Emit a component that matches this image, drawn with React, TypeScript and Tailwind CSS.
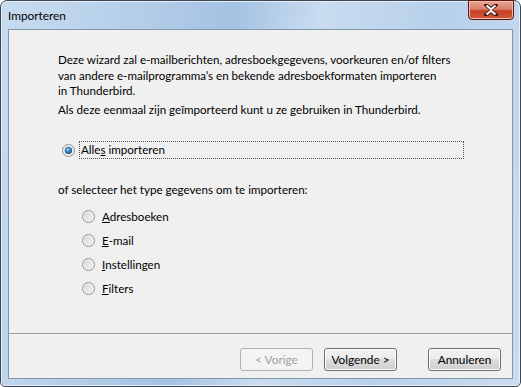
import React from "react"

const FONT = { fontFamily: '"Segoe UI", Lato, "Open Sans", sans-serif' }

const Radio: React.FC<{ checked?: boolean }> = ({ checked }) => (
  <svg width="13" height="13" viewBox="0 0 13 13" className="flex-shrink-0">
    <defs>
      <linearGradient id="rb" x1="0" y1="0" x2="1" y2="1">
        <stop offset="0" stopColor="#d6d6d6" />
        <stop offset="1" stopColor="#f6f6f6" />
      </linearGradient>
      <radialGradient id="dot" cx="0.4" cy="0.35" r="0.7">
        <stop offset="0" stopColor="#a8dcf6" />
        <stop offset="0.5" stopColor="#2b8ccc" />
        <stop offset="1" stopColor="#0d4f84" />
      </radialGradient>
    </defs>
    <circle cx="6.5" cy="6.5" r="6" fill="#f4f4f4" stroke="#8f8f8f" strokeWidth="1" />
    <circle cx="6.5" cy="6.5" r="4.5" fill="url(#rb)" />
    {checked && <circle cx="6.5" cy="6.5" r="3.3" fill="url(#dot)" stroke="#1c4e75" strokeWidth="0.6" />}
  </svg>
)

const Btn: React.FC<{ children: React.ReactNode; disabled?: boolean; className?: string }> = ({ children, disabled, className = "" }) => (
  <div
    className={`w-[73px] h-[23px] rounded-[3px] border flex items-center justify-center text-[11.8px] ${
      disabled
        ? "border-[#adb2b5] bg-[#f4f4f4] text-[#a0a0a0]"
        : "border-[#707070] text-black bg-[linear-gradient(#f2f2f2_0%,#ebebeb_50%,#dddddd_50%,#cfcfcf_100%)] shadow-[inset_0_0_0_1px_#fbfbfb]"
    } ${className}`}
  >
    {children}
  </div>
)

export default function App() {
  const options = [
    { key: "A", rest: "dresboeken" },
    { key: "E", rest: "-mail" },
    { key: "I", rest: "nstellingen" },
    { key: "F", rest: "ilters" },
  ]
  return (
    <div style={FONT} className="w-[521px] h-[387px] overflow-hidden bg-white">
      <div className="w-full h-full flex flex-col rounded-t-[7px] rounded-b-[5px] border border-[#3d4753] bg-[linear-gradient(100deg,#c8dcf0_0%,#b3cde8_25%,#a4c2e2_40%,#c9dcf0_55%,#b7d0ea_75%,#cadcef_100%)] shadow-[inset_0_0_0_1px_#e6eff9]">
        {/* title bar */}
        <div className="h-[28px] flex items-start justify-between">
          <span className="mt-[7px] ml-[7px] text-[11.8px] text-black leading-[15px]">Importeren</span>
          <div className="mr-[6px] w-[46px] h-[20px] -mt-px rounded-b-[4px] border border-[#5a1a12] bg-[linear-gradient(#e9a896_0%,#d8806a_45%,#c53f25_55%,#d25a40_100%)] shadow-[inset_0_0_0_1px_#f0b9a8] flex items-center justify-center">
            <svg width="14" height="12" viewBox="0 0 14 12">
              <path d="M2 1 L7 5 L12 1 M2 11 L7 7 L12 11" stroke="#3b1a14" strokeWidth="3.6" fill="none" strokeLinecap="square" />
              <path d="M2.5 1.5 L7 5.2 L11.5 1.5 M2.5 10.5 L7 6.8 L11.5 10.5" stroke="#ffffff" strokeWidth="2" fill="none" />
            </svg>
          </div>
        </div>
        {/* client */}
        <div className="mx-[7px] mb-[7px] flex-1 flex flex-col bg-[#f0f0f0] border border-[#8297ad] text-black">
          <div className="flex-1 pl-[49px] pr-[20px] pt-[22px] text-[11.6px] leading-[15.5px]">
            <p className="whitespace-nowrap">
              Deze wizard zal e-mailberichten, adresboekgegevens, voorkeuren en/of filters
              <br />
              van andere e-mailprogramma’s en bekende adresboekformaten importeren
              <br />
              in Thunderbird.
            </p>
            <p className="mt-[3px]">Als deze eenmaal zijn geïmporteerd kunt u ze gebruiken in Thunderbird.</p>

            <div className="mt-[24px] ml-[4px] flex items-center gap-[4px]">
              <Radio checked />
              <div className="w-[385px] h-[18px] border border-dotted border-[#555] flex items-center pl-px">
                <span>
                  Alle<u>s</u> importeren
                </span>
              </div>
            </div>

            <p className="mt-[23px]">of selecteer het type gegevens om te importeren:</p>

            <div className="mt-[11px] ml-[24px] flex flex-col gap-[8px]">
              {options.map((o) => (
                <div key={o.key} className="h-[16px] flex items-center gap-[7px]">
                  <Radio />
                  <span>
                    <u>{o.key}</u>
                    {o.rest}
                  </span>
                </div>
              ))}
            </div>
          </div>
          <div className="border-t border-[#a0a0a0] h-[45px] flex items-start justify-end pt-[14px] pr-[11px]">
            <Btn disabled>&lt; Vorige</Btn>
            <Btn className="ml-[11px]">Volgende &gt;</Btn>
            <Btn className="ml-[31px]">Annuleren</Btn>
          </div>
        </div>
      </div>
    </div>
  )
}
